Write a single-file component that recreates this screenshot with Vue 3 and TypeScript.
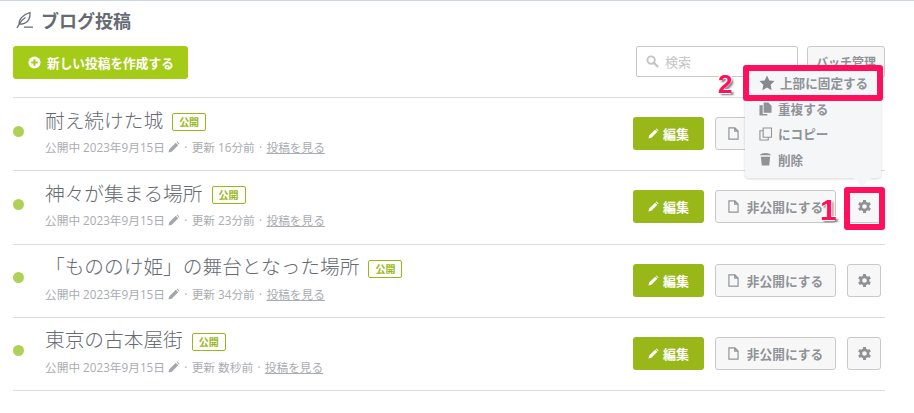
<script setup lang="ts">
interface Post {
  title: string
  updated: string
}

const posts: Post[] = [
  { title: '耐え続けた城', updated: '16分前' },
  { title: '神々が集まる場所', updated: '23分前' },
  { title: '「もののけ姫」の舞台となった場所', updated: '34分前' },
  { title: '東京の古本屋街', updated: '数秒前' },
]

// 歯車アイコン（歯6枚）
const teeth = [0, 60, 120, 180, 240, 300]
</script>

<template>
  <div class="page">
    <header class="head">
      <svg class="quill" viewBox="0 0 17 18" width="17" height="18">
        <path d="M1 17C2 15 2.500 14 3.200 13.200 2.500 8.500 7 3.500 14 1.500c.5 5-1.500 11-8.500 11.500-.9 0-1.600.1-2.300.2M3.200 13.200C5 10 7 8 9.500 6.500M8 16.200h9" fill="none" stroke="#666b73" stroke-width="1.300" />
      </svg>
      <h1>ブログ投稿</h1>
    </header>

    <div class="tools">
      <button class="create">
        <svg viewBox="0 0 14 14" width="13" height="13"><circle cx="7" cy="7" r="6.500" fill="#fff" /><path d="M7 3.500v7M3.500 7h7" stroke="#a5cb19" stroke-width="2.200" /></svg>
        新しい投稿を作成する
      </button>
      <div class="tools-right">
        <div class="search">
          <svg viewBox="0 0 14 14" width="13" height="13"><circle cx="5.500" cy="5.500" r="4" fill="none" stroke="#c4c4c4" stroke-width="2" /><path d="M8.500 8.500l4.500 4.500" stroke="#c4c4c4" stroke-width="2.400" /></svg>
          <span>検索</span>
        </div>
        <button class="batch">バッチ管理</button>
      </div>
    </div>

    <ul class="posts">
      <li v-for="post in posts" :key="post.title" class="post">
        <span class="dot"></span>
        <div class="info">
          <div class="title-line">
            <span class="title">{{ post.title }}</span>
            <span class="badge">公開</span>
          </div>
          <div class="meta">公開中 2023年9月15日 <svg viewBox="0 0 12 12" width="12" height="12"><path d="M0.500 11.500l.8-3.200 6.500-6.500 2.400 2.400-6.500 6.500zM8.500 1.100l.8-.6 2.200 2.200-.6.800z" fill="#a3a6ab" /></svg> <span class="sep">·</span> 更新 {{ post.updated }} <span class="sep">·</span> <a>投稿を見る</a></div>
        </div>
        <div class="actions">
          <button class="edit">
            <svg viewBox="0 0 12 12" width="11" height="11"><path d="M0.500 11.500l.8-3.200 6.500-6.500 2.400 2.400-6.500 6.500zM8.500 1.100l.8-.6 2.200 2.200-.6.800z" fill="#fff" /></svg>
            編集
          </button>
          <button class="unpublish">
            <svg viewBox="0 0 12 14" width="11" height="13"><path d="M1 .8h6.500L11 4.300v8.900H1zM7.300 1v3.500H11" fill="none" stroke="#8f949b" stroke-width="1.300" /></svg>
            非公開にする
          </button>
          <button class="gear">
            <svg viewBox="0 0 14 14" width="13" height="13">
              <rect v-for="deg in teeth" :key="deg" x="5.400" y="0" width="3.200" height="3" fill="#8e9196" :transform="`rotate(${deg} 7 7)`" />
              <circle cx="7" cy="7" r="3.900" fill="none" stroke="#8e9196" stroke-width="2.800" />
            </svg>
          </button>
        </div>
      </li>
    </ul>

    <div class="menu">
      <div class="menu-item">
        <svg viewBox="0 0 16 16" width="16" height="16"><path d="M8 .5l2.300 4.900 5.200.7-3.800 3.700.9 5.400L8 12.600l-4.600 2.600.9-5.400L.5 6.100l5.200-.7z" fill="#85888d" /></svg>
        上部に固定する
      </div>
      <div class="menu-item">
        <svg viewBox="0 0 14 15" width="13" height="14"><path d="M5 .5h5l3.500 3.500v7.500H5zM.5 3.500H4v9.500h5v1.500H.5z" fill="#8f9297" /></svg>
        重複する
      </div>
      <div class="menu-item">
        <svg viewBox="0 0 14 15" width="13" height="14"><path d="M4.500 1h9v10h-9zM4.500 4H1v10h9v-3" fill="none" stroke="#8f9297" stroke-width="1.200" /></svg>
        にコピー
      </div>
      <div class="menu-item">
        <svg viewBox="0 0 14 15" width="13" height="14"><path d="M1 3.500a6 2.500 0 0 1 12 0zM2 5h10l-1 9.500H3z" fill="#8f9297" /></svg>
        削除
      </div>
      <span class="arrow"></span>
    </div>

    <div class="mark mark-menu"></div>
    <div class="mark mark-gear"></div>
    <span class="num num-1">1</span>
    <span class="num num-2">2</span>
  </div>
</template>

<style>
body {
  background: #fff;
  overflow: hidden;
}
</style>

<style scoped>
.page {
  position: relative;
  width: 914px;
  height: 413px;
  box-sizing: border-box;
  border-top: 1px solid #c9d4e4;
  padding: 0 29px 0 13px;
  font-family: "Open Sans", "Noto Sans CJK JP", sans-serif;
  overflow: hidden;
}
button {
  font-family: inherit;
  cursor: pointer;
}
.head {
  display: flex;
  align-items: center;
  gap: 8px;
  height: 37px;
  padding-left: 3px;
}
.head h1 {
  margin: 0;
  font-size: 18px;
  font-weight: 700;
  color: #666b73;
}
.tools {
  display: flex;
  justify-content: space-between;
  margin-top: 8px;
  height: 51px;
}
.create {
  display: flex;
  align-items: center;
  gap: 6px;
  width: 175px;
  height: 33px;
  padding: 0 0 0 15px;
  border: none;
  border-radius: 3px;
  background: #a5cb19;
  color: #fff;
  font-size: 12.700px;
  font-weight: 700;
}
.tools-right {
  display: flex;
  gap: 9px;
}
.search {
  display: flex;
  align-items: center;
  gap: 6px;
  box-sizing: border-box;
  width: 162px;
  height: 31px;
  padding-left: 9px;
  border: 1px solid #c9c9c9;
  border-radius: 2px;
  color: #c4c4c4;
  font-size: 13px;
}
.batch {
  box-sizing: border-box;
  width: 78px;
  height: 32px;
  padding: 0;
  border: 1px solid #c9c9c9;
  border-radius: 3px;
  background: #f7f7f7;
  color: #8f9297;
  font-size: 12px;
  font-weight: 700;
}
.posts {
  margin: 0;
  padding: 0;
  list-style: none;
  border-top: 1px solid #dcdcdc;
}
.post {
  display: flex;
  align-items: center;
  box-sizing: border-box;
  height: 73.250px;
  border-bottom: 1px solid #dcdcdc;
}
.dot {
  flex: none;
  width: 11px;
  height: 11px;
  margin: -6px 21px 0 0;
  border-radius: 50%;
  background: #aed258;
}
.info {
  flex: 1;
  margin-top: -7px;
}
.title-line {
  display: flex;
  align-items: center;
  gap: 9px;
  height: 26px;
}
.title {
  font-size: 19.700px;
  font-weight: 300;
  color: #666b73;
}
.badge {
  box-sizing: border-box;
  width: 34px;
  height: 18px;
  margin-top: 6px;
  border: 1px solid #98b81a;
  border-radius: 2px;
  color: #98b81a;
  font-size: 10px;
  font-weight: 700;
  line-height: 16px;
  text-align: center;
}
.meta {
  margin-top: 7px;
  font-size: 11.700px;
  line-height: 16px;
  color: #a9acb1;
  white-space: nowrap;
}
.meta svg {
  vertical-align: -1px;
}
.meta .sep {
  margin: 0 1.250px;
}
.meta a {
  text-decoration: underline;
}
.actions {
  display: flex;
  gap: 11px;
  margin: -1px 4px 0 0;
}
.actions button {
  display: flex;
  align-items: center;
  justify-content: center;
  box-sizing: border-box;
  height: 33px;
  padding: 0;
  border-radius: 3px;
  font-size: 12.700px;
  font-weight: 700;
}
.actions .edit {
  gap: 4px;
  width: 71px;
  border: none;
  background: #98b81a;
  color: #fff;
  font-size: 13px;
}
.actions .unpublish {
  gap: 8px;
  width: 121px;
  border: 1px solid #c9c9c9;
  background: #f7f7f7;
  color: #8f9297;
}
.actions .gear {
  width: 34px;
  border: 1px solid #c9c9c9;
  background: #f7f7f7;
}
.menu {
  position: absolute;
  left: 745px;
  top: 65px;
  box-sizing: border-box;
  width: 136px;
  height: 112px;
  padding: 3px 0 0 14px;
  background: #f5f6f7;
  border-radius: 4px;
  box-shadow: 0 1px 3px rgba(0, 0, 0, 0.16);
}
.menu-item {
  display: flex;
  align-items: center;
  gap: 6px;
  height: 25.300px;
  font-size: 12.600px;
  font-weight: 700;
  color: #8f9297;
}
.menu-item:first-child {
  gap: 5px;
  height: 27px;
  margin-bottom: 0;
  white-space: nowrap;
}
.arrow {
  position: absolute;
  right: 13px;
  bottom: -6px;
  width: 12px;
  height: 12px;
  background: #f5f6f7;
  transform: rotate(45deg);
}
.mark {
  position: absolute;
  box-sizing: border-box;
  border: 6px solid #ff0f5c;
  border-radius: 3px;
}
.mark-menu {
  left: 743px;
  top: 64px;
  width: 140px;
  height: 36px;
}
.mark-gear {
  left: 844px;
  top: 186px;
  width: 41px;
  height: 43px;
}
.num {
  position: absolute;
  font-family: "Liberation Sans", sans-serif;
  font-weight: 700;
  line-height: 1;
  color: #ff0f5c;
  text-shadow: -1px -1px 0 #fff, 1px -1px 0 #fff, -1px 1px 0 #fff, 2px 2px 2px rgba(0, 0, 0, 0.5);
}
.num-1 {
  left: 820px;
  top: 194px;
  font-size: 30px;
}
.num-2 {
  left: 718px;
  top: 70px;
  font-size: 26px;
}
</style>
